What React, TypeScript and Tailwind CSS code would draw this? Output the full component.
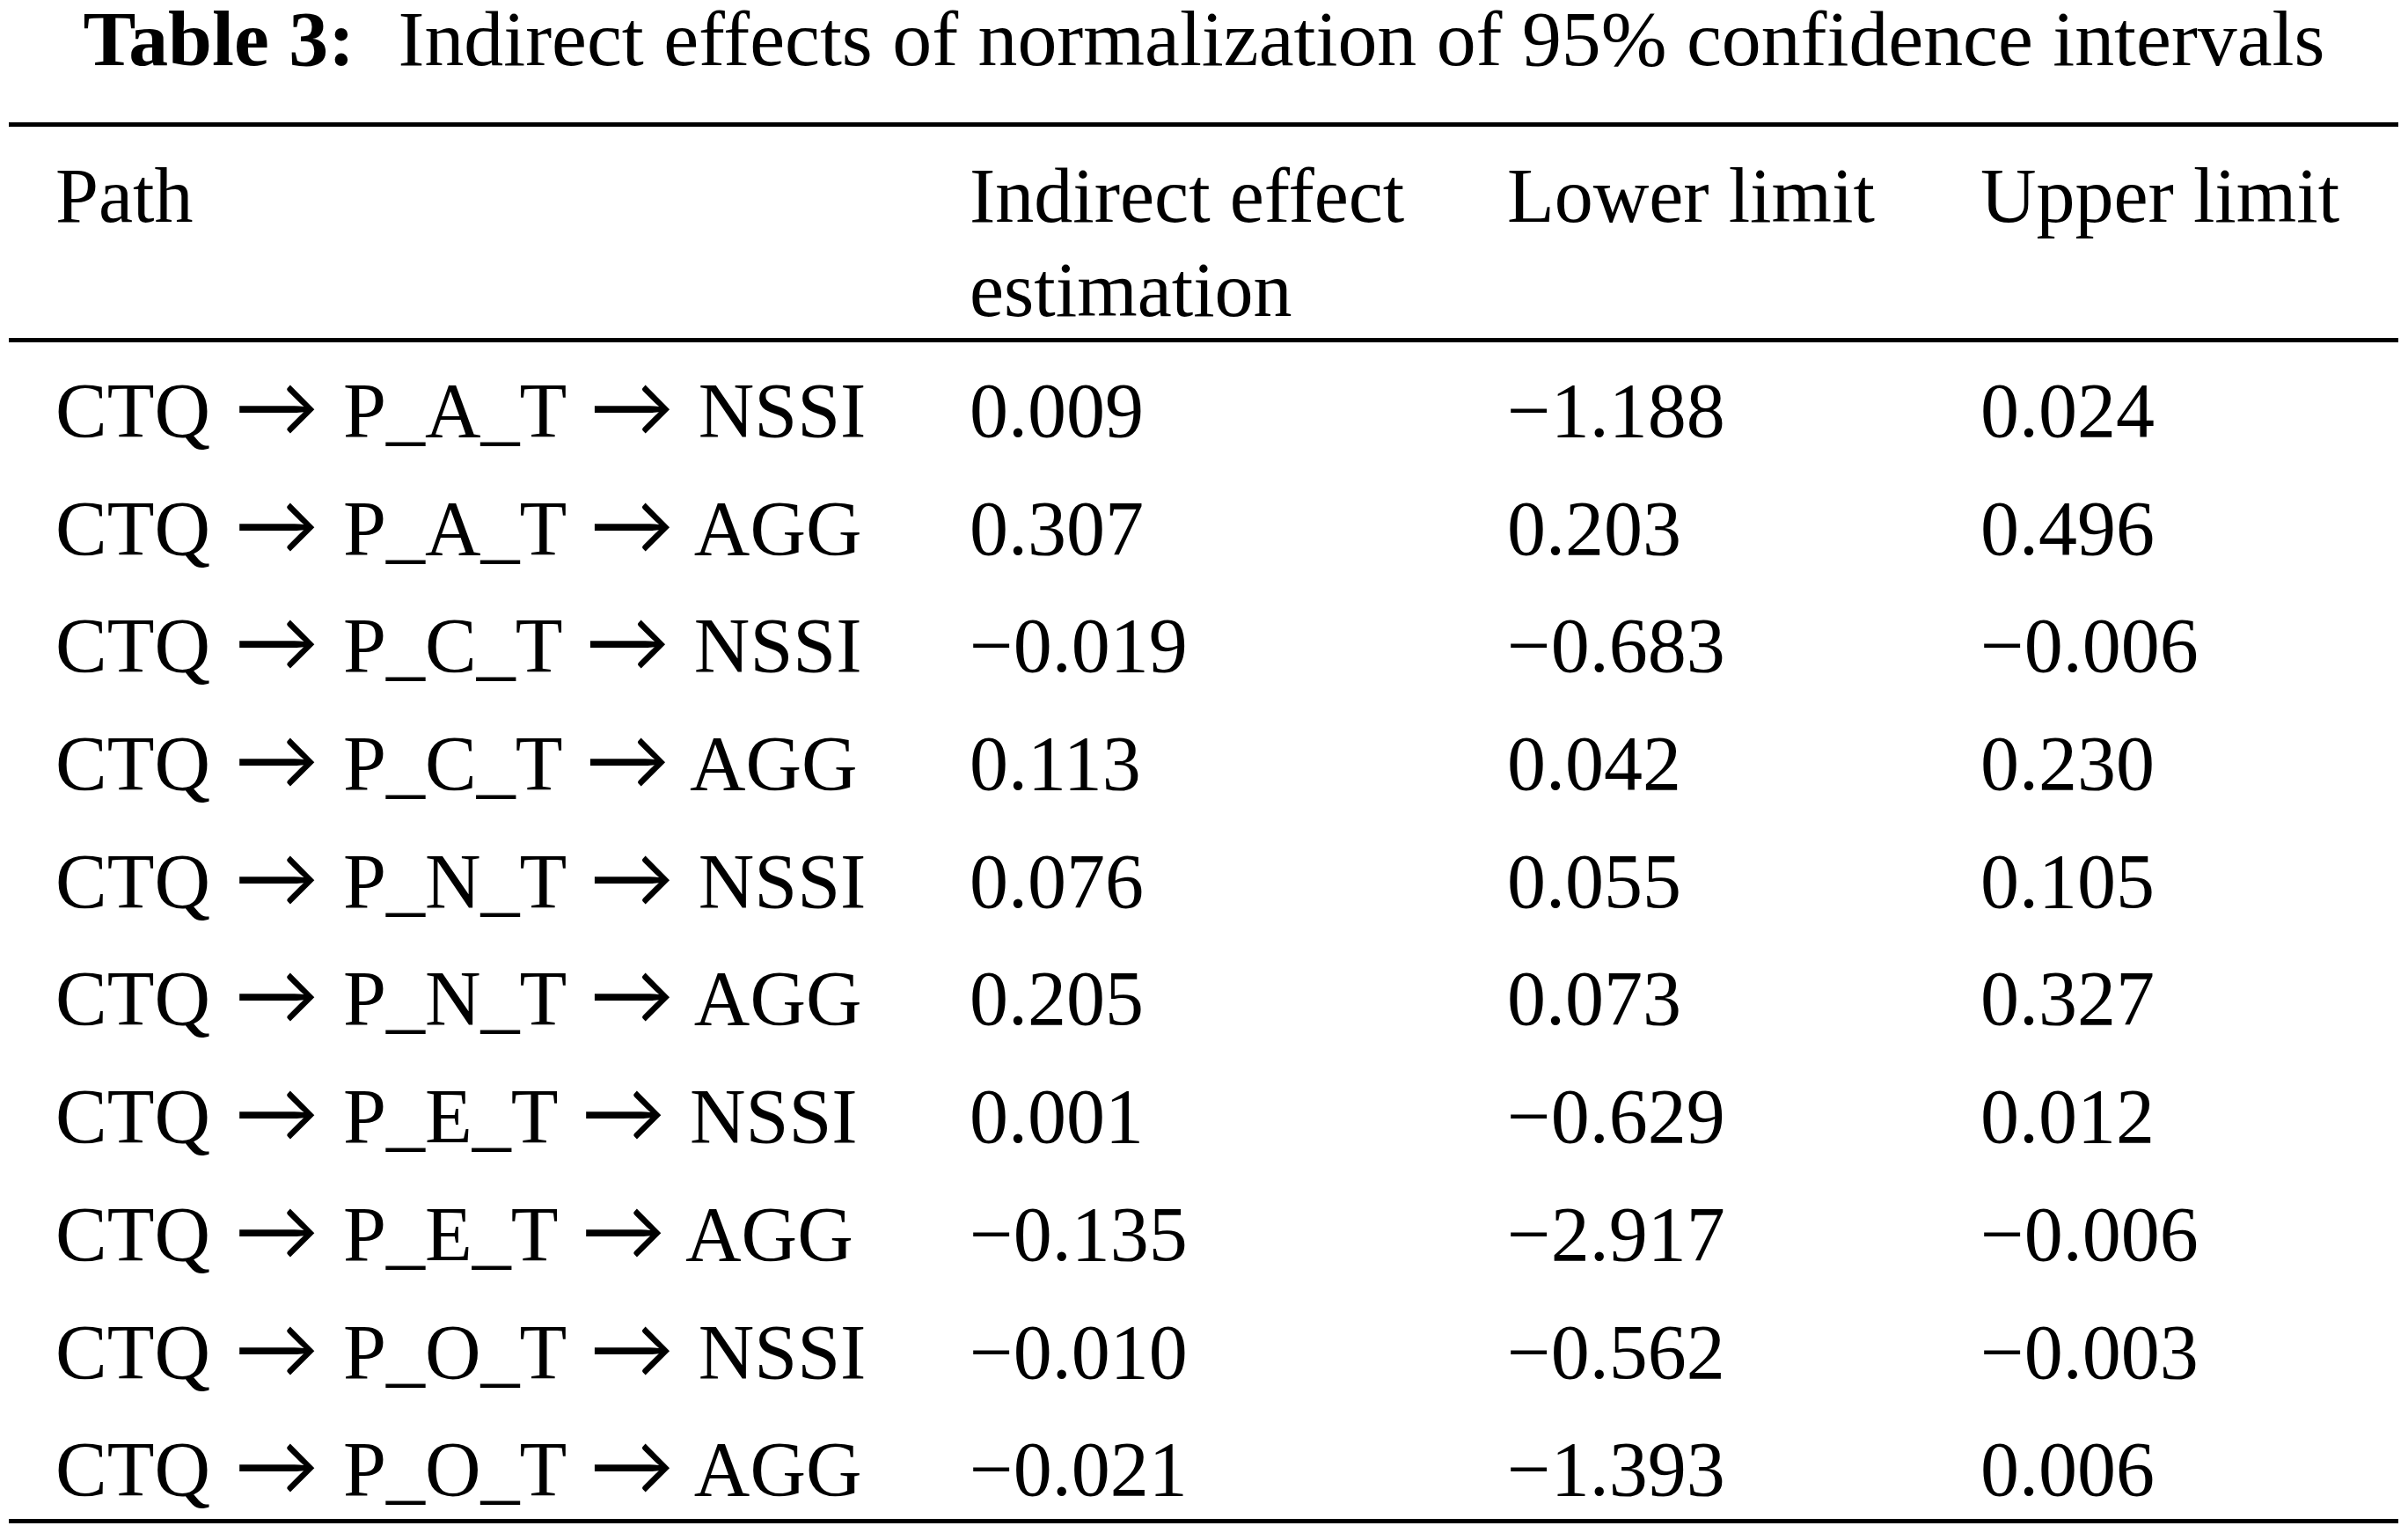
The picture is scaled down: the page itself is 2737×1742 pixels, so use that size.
import React from "react";

const rows: [string, string, string, string, string][] = [
  ["A", "NSSI", "0.009", "−1.188", "0.024"],
  ["A", "AGG", "0.307", "0.203", "0.496"],
  ["C", "NSSI", "−0.019", "−0.683", "−0.006"],
  ["C", "AGG", "0.113", "0.042", "0.230"],
  ["N", "NSSI", "0.076", "0.055", "0.105"],
  ["N", "AGG", "0.205", "0.073", "0.327"],
  ["E", "NSSI", "0.001", "−0.629", "0.012"],
  ["E", "AGG", "−0.135", "−2.917", "−0.006"],
  ["O", "NSSI", "−0.010", "−0.562", "−0.003"],
  ["O", "AGG", "−0.021", "−1.393", "0.006"],
];

function Arrow() {
  return (
    <span className="inline-block w-[107px] text-center font-['Lato'] text-[96px] leading-[0]">
      →
    </span>
  );
}

export default function App() {
  return (
    <div
      className="w-[2737px] h-[1742px] bg-white text-black overflow-hidden"
      style={{ fontFamily: '"Liberation Serif", "Times New Roman", serif' }}
    >
      <div className="h-[88px] text-[89.8px] leading-[88px] text-center whitespace-nowrap">
        <span className="font-bold">Table 3:</span>
        <span className="ml-[27px]"> Indirect effects of normalization of 95% confidence intervals</span>
      </div>
      <div className="ml-[10px] w-[2716px] mt-[51px]">
        <div className="h-[5px] bg-black" />
        <div className="flex pt-[25px] pb-[1px] text-[88px] leading-[107px] whitespace-nowrap">
          <div className="w-[1092px] pl-[53px]">Path</div>
          <div className="w-[611px]">
            Indirect effect
            <br />
            estimation
          </div>
          <div className="w-[538px]">Lower limit</div>
          <div className="flex-1">Upper limit</div>
        </div>
        <div className="h-[5px] bg-black" />
        <div className="flex flex-col gap-[33.7px] pt-[28px] pb-[6px] text-[88px] leading-[100px] whitespace-nowrap">
          {rows.map((r, i) => (
            <div key={i} className="flex h-[100px]">
              <div className="w-[1092px] pl-[53px]">
                CTQ <Arrow /> P_{r[0]}_T <Arrow /> {r[1]}
              </div>
              <div className="w-[611px]">{r[2]}</div>
              <div className="w-[538px]">{r[3]}</div>
              <div className="flex-1">{r[4]}</div>
            </div>
          ))}
        </div>
        <div className="h-[5px] bg-black" />
      </div>
    </div>
  );
}
